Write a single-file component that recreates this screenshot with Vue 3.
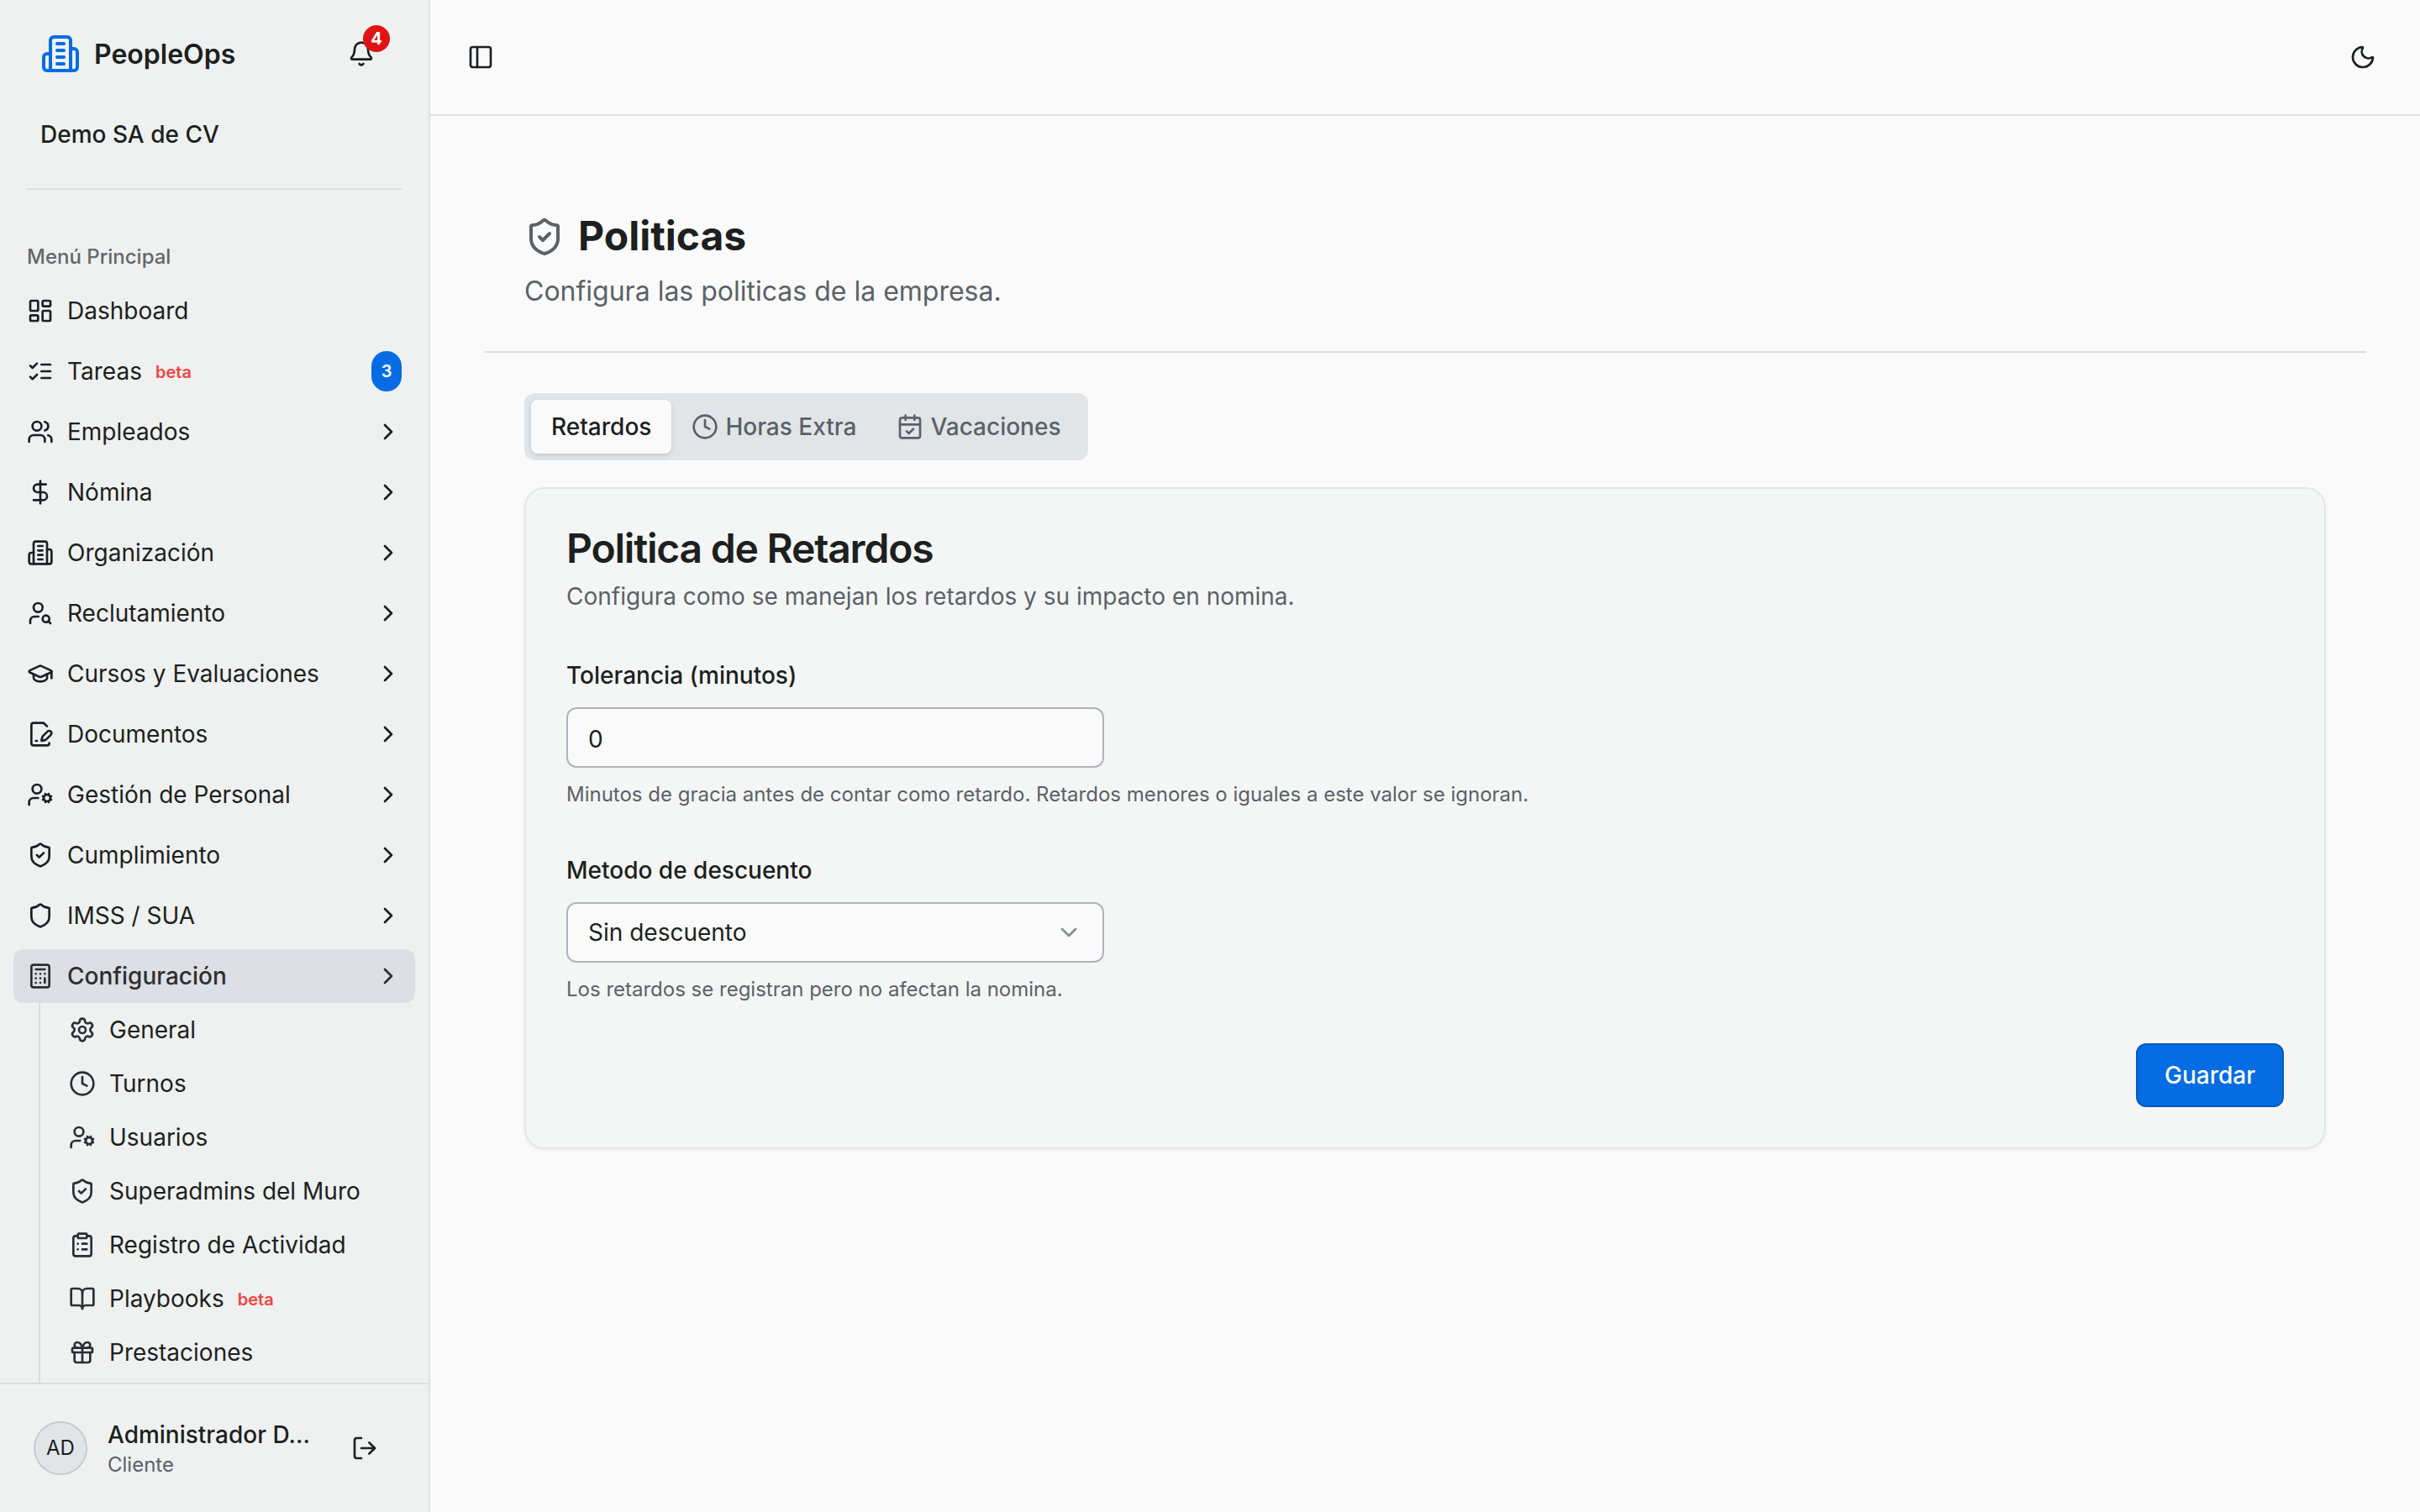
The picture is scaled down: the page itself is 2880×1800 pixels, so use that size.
<template>
  <div class="app-shell">
    <aside class="sidebar">
      <div class="sidebar-header">
        <div class="brand-row">
          <div class="brand">
            <svg class="icon brand-icon" viewBox="0 0 24 24" v-html="icons.building"></svg>
            <span class="brand-name">PeopleOps</span>
          </div>
          <button class="bell-button">
            <svg class="icon" viewBox="0 0 24 24" v-html="icons.bell"></svg>
            <span class="bell-badge">4</span>
          </button>
        </div>
        <p class="company">Demo SA de CV</p>
      </div>
      <div class="sidebar-separator"></div>

      <!-- Main navigation -->
      <nav class="sidebar-nav">
        <p class="nav-label">Menú Principal</p>
        <ul class="nav-list">
          <li
            v-for="item in menu"
            :key="item.label"
            class="nav-item"
            :class="{ active: item.active }"
          >
            <svg class="icon" viewBox="0 0 24 24" v-html="icons[item.icon]"></svg>
            <span class="nav-text">{{ item.label }}</span>
            <span v-if="item.beta" class="beta">beta</span>
            <span v-if="item.count" class="nav-count">{{ item.count }}</span>
            <svg
              v-if="item.children"
              class="icon nav-chevron"
              viewBox="0 0 24 24"
              v-html="icons.chevronRight"
            ></svg>
          </li>
        </ul>
        <ul class="subnav">
          <li v-for="item in submenu" :key="item.label" class="subnav-item">
            <svg class="icon" viewBox="0 0 24 24" v-html="icons[item.icon]"></svg>
            <span class="nav-text">{{ item.label }}</span>
            <span v-if="item.beta" class="beta">beta</span>
          </li>
        </ul>
      </nav>

      <!-- User -->
      <div class="sidebar-footer">
        <div class="avatar">AD</div>
        <div class="user-info">
          <p class="user-name">Administrador D…</p>
          <p class="user-role">Cliente</p>
        </div>
        <svg class="icon" viewBox="0 0 24 24" v-html="icons.logout"></svg>
      </div>
    </aside>

    <div class="main">
      <header class="topbar">
        <svg class="icon" viewBox="0 0 24 24" v-html="icons.panel"></svg>
        <svg class="icon" viewBox="0 0 24 24" v-html="icons.moon"></svg>
      </header>

      <main class="content">
        <div class="page-header">
          <h1 class="page-title">
            <svg class="icon title-icon" viewBox="0 0 24 24" v-html="icons.shieldCheck"></svg>
            <span class="title-text">Politicas</span>
          </h1>
          <p class="page-description">Configura las politicas de la empresa.</p>
        </div>

        <div class="page-body">
          <div class="tabs">
            <button
              v-for="tab in tabs"
              :key="tab.id"
              class="tab"
              :class="{ selected: tab.id === activeTab }"
              @click="activeTab = tab.id"
            >
              <svg v-if="tab.icon" class="icon" viewBox="0 0 24 24" v-html="icons[tab.icon]"></svg>
              <span>{{ tab.label }}</span>
            </button>
          </div>

          <section class="card">
            <h2 class="card-title">Politica de Retardos</h2>
            <p class="card-description">
              Configura como se manejan los retardos y su impacto en nomina.
            </p>

            <div class="field">
              <label class="field-label" for="tolerancia">Tolerancia (minutos)</label>
              <input id="tolerancia" v-model="tolerance" class="control" type="text" />
              <p class="field-help">
                Minutos de gracia antes de contar como retardo. Retardos menores o iguales a este valor se ignoran.
              </p>
            </div>

            <div class="field">
              <label class="field-label">Metodo de descuento</label>
              <button class="control select">
                <span>Sin descuento</span>
                <svg class="icon select-icon" viewBox="0 0 24 24" v-html="icons.chevronDown"></svg>
              </button>
              <p class="field-help">Los retardos se registran pero no afectan la nomina.</p>
            </div>

            <div class="card-actions">
              <button class="save-button">Guardar</button>
            </div>
          </section>
        </div>
      </main>
    </div>
  </div>
</template>

<script setup>
import { ref } from 'vue';

const activeTab = ref('retardos');
const tolerance = ref('0');

const tabs = [
  { id: 'retardos', label: 'Retardos' },
  { id: 'horas', label: 'Horas Extra', icon: 'clock' },
  { id: 'vacaciones', label: 'Vacaciones', icon: 'calendarCheck' }
];

const menu = [
  { label: 'Dashboard', icon: 'dashboard' },
  { label: 'Tareas', icon: 'listChecks', beta: true, count: 3 },
  { label: 'Empleados', icon: 'users', children: true },
  { label: 'Nómina', icon: 'dollar', children: true },
  { label: 'Organización', icon: 'building', children: true },
  { label: 'Reclutamiento', icon: 'userSearch', children: true },
  { label: 'Cursos y Evaluaciones', icon: 'graduation', children: true },
  { label: 'Documentos', icon: 'filePen', children: true },
  { label: 'Gestión de Personal', icon: 'userCog', children: true },
  { label: 'Cumplimiento', icon: 'shieldCheck', children: true },
  { label: 'IMSS / SUA', icon: 'shield', children: true },
  { label: 'Configuración', icon: 'calculator', children: true, active: true }
];

const submenu = [
  { label: 'General', icon: 'settings' },
  { label: 'Turnos', icon: 'clock' },
  { label: 'Usuarios', icon: 'userCog' },
  { label: 'Superadmins del Muro', icon: 'shieldCheck' },
  { label: 'Registro de Actividad', icon: 'clipboard' },
  { label: 'Playbooks', icon: 'book', beta: true },
  { label: 'Prestaciones', icon: 'gift' }
];

const shieldPath = '<path d="M20 13c0 5-3.5 7.5-7.66 8.95a1 1 0 0 1-.67-.01C7.5 20.5 4 18 4 13V6a1 1 0 0 1 1-1c2 0 4.5-1.2 6.24-2.72a1.17 1.17 0 0 1 1.52 0C14.51 3.81 17 5 19 5a1 1 0 0 1 1 1z"/>';

// 24x24 stroke icons
const icons = {
  building: '<path d="M6 22V4a2 2 0 0 1 2-2h8a2 2 0 0 1 2 2v18Z"/><path d="M6 12H4a2 2 0 0 0-2 2v6a2 2 0 0 0 2 2h2"/><path d="M18 9h2a2 2 0 0 1 2 2v9a2 2 0 0 1-2 2h-2"/><path d="M10 6h4M10 10h4M10 14h4M10 18h4"/>',
  bell: '<path d="M10.268 21a2 2 0 0 0 3.464 0"/><path d="M3.262 15.326A1 1 0 0 0 4 17h16a1 1 0 0 0 .74-1.673C19.41 13.956 18 12.499 18 8A6 6 0 0 0 6 8c0 4.499-1.411 5.956-2.738 7.326"/>',
  dashboard: '<rect width="7" height="9" x="3" y="3" rx="1"/><rect width="7" height="5" x="14" y="3" rx="1"/><rect width="7" height="9" x="14" y="12" rx="1"/><rect width="7" height="5" x="3" y="16" rx="1"/>',
  listChecks: '<path d="m3 17 2 2 4-4"/><path d="m3 7 2 2 4-4"/><path d="M13 6h8M13 12h8M13 18h8"/>',
  users: '<path d="M16 21v-2a4 4 0 0 0-4-4H6a4 4 0 0 0-4 4v2"/><circle cx="9" cy="7" r="4"/><path d="M22 21v-2a4 4 0 0 0-3-3.87"/><path d="M16 3.13a4 4 0 0 1 0 7.75"/>',
  dollar: '<path d="M12 2v20"/><path d="M17 5H9.5a3.5 3.5 0 0 0 0 7h5a3.5 3.5 0 0 1 0 7H6"/>',
  userSearch: '<circle cx="10" cy="7" r="4"/><path d="M10.3 15H7a4 4 0 0 0-4 4v2"/><circle cx="17" cy="17" r="3"/><path d="m21 21-1.9-1.9"/>',
  graduation: '<path d="M21.42 10.922a1 1 0 0 0-.019-1.838L12.83 5.18a2 2 0 0 0-1.66 0L2.6 9.08a1 1 0 0 0 0 1.832l8.57 3.908a2 2 0 0 0 1.66 0z"/><path d="M22 10v6"/><path d="M6 12.5V16a6 3 0 0 0 12 0v-3.5"/>',
  filePen: '<path d="m18 5-2.414-2.414A2 2 0 0 0 14.172 2H6a2 2 0 0 0-2 2v16a2 2 0 0 0 2 2h12a2 2 0 0 0 2-2"/><path d="M21.378 12.626a1 1 0 0 0-3.004-3.004l-4.01 4.012a2 2 0 0 0-.506.854l-.837 2.87a.5.5 0 0 0 .62.62l2.87-.837a2 2 0 0 0 .854-.506z"/><path d="M8 18h1"/>',
  userCog: '<path d="M10 15H6a4 4 0 0 0-4 4v2"/><path d="m14.305 16.53.923-.382M15.228 13.852l-.923-.383M16.852 12.228l-.383-.923M16.852 17.772l-.383.924M19.148 12.228l.383-.923M19.53 18.696l-.382-.924M20.772 13.852l.924-.383M20.772 16.148l.924.383"/><circle cx="18" cy="15" r="3"/><circle cx="9" cy="7" r="4"/>',
  shield: shieldPath,
  shieldCheck: shieldPath + '<path d="m9 12 2 2 4-4"/>',
  calculator: '<rect width="16" height="20" x="4" y="2" rx="2"/><path d="M8 6h8M16 14v4M16 10h.01M12 10h.01M8 10h.01M12 14h.01M8 14h.01M12 18h.01M8 18h.01"/>',
  settings: '<path d="M9.671 4.136a2.34 2.34 0 0 1 4.659 0 2.34 2.34 0 0 0 3.319 1.915 2.34 2.34 0 0 1 2.33 4.033 2.34 2.34 0 0 0 0 3.831 2.34 2.34 0 0 1-2.33 4.033 2.34 2.34 0 0 0-3.319 1.915 2.34 2.34 0 0 1-4.659 0 2.34 2.34 0 0 0-3.32-1.915 2.34 2.34 0 0 1-2.33-4.033 2.34 2.34 0 0 0 0-3.831A2.34 2.34 0 0 1 6.35 6.051a2.34 2.34 0 0 0 3.319-1.915"/><circle cx="12" cy="12" r="3"/>',
  clock: '<circle cx="12" cy="12" r="10"/><path d="M12 6v6l4 2"/>',
  clipboard: '<rect width="8" height="4" x="8" y="2" rx="1"/><path d="M16 4h2a2 2 0 0 1 2 2v14a2 2 0 0 1-2 2H6a2 2 0 0 1-2-2V6a2 2 0 0 1 2-2h2"/><path d="M12 11h4M12 16h4M8 11h.01M8 16h.01"/>',
  book: '<path d="M12 7v14"/><path d="M3 18a1 1 0 0 1-1-1V4a1 1 0 0 1 1-1h5a4 4 0 0 1 4 4 4 4 0 0 1 4-4h5a1 1 0 0 1 1 1v13a1 1 0 0 1-1 1h-6a3 3 0 0 0-3 3 3 3 0 0 0-3-3z"/>',
  gift: '<rect width="18" height="4" x="3" y="8" rx="1"/><path d="M12 8v13"/><path d="M19 12v7a2 2 0 0 1-2 2H7a2 2 0 0 1-2-2v-7"/><path d="M7.5 8a2.5 2.5 0 0 1 0-5A4.8 8 0 0 1 12 8a4.8 8 0 0 1 4.5-5 2.5 2.5 0 0 1 0 5"/>',
  calendarCheck: '<path d="M8 2v4M16 2v4"/><rect width="18" height="18" x="3" y="4" rx="2"/><path d="M3 10h18"/><path d="m9 16 2 2 4-4"/>',
  logout: '<path d="m16 17 5-5-5-5"/><path d="M21 12H9"/><path d="M9 21H5a2 2 0 0 1-2-2V5a2 2 0 0 1 2-2h4"/>',
  panel: '<rect width="18" height="18" x="3" y="3" rx="2"/><path d="M9 3v18"/>',
  moon: '<path d="M20.985 12.486a9 9 0 1 1-9.473-9.472c.405-.022.617.46.402.803a6 6 0 0 0 8.268 8.268c.344-.215.825-.004.803.401"/>',
  chevronRight: '<path d="m9 18 6-6-6-6"/>',
  chevronDown: '<path d="m6 9 6 6 6-6"/>'
};
</script>

<style>
body {
  margin: 0;
  background-color: #fafafa;
}
</style>

<style scoped>
.app-shell {
  display: flex;
  height: 1800px;
  overflow: hidden;
  font-family: Inter, "Liberation Sans", sans-serif;
  font-size: 28px;
  line-height: 40px;
  color: #1d1f20;
  background-color: #fafafa;
}

.app-shell * {
  box-sizing: border-box;
}

p,
h1,
h2,
ul {
  margin: 0;
  padding: 0;
  list-style: none;
}

button,
input {
  margin: 0;
  padding: 0;
  border: none;
  background: none;
  font: inherit;
  letter-spacing: inherit;
  color: inherit;
}

.icon {
  flex-shrink: 0;
  width: 32px;
  height: 32px;
  fill: none;
  stroke: currentColor;
  stroke-width: 2;
  stroke-linecap: round;
  stroke-linejoin: round;
}

/* Sidebar */
.sidebar {
  display: flex;
  flex-direction: column;
  flex-shrink: 0;
  width: 512px;
  box-sizing: border-box;
  border-right: 2px solid #dfe1e1;
  background-color: #eef1f0;
}

.sidebar-header {
  padding: 32px 48px 0;
}

.brand-row {
  display: flex;
  align-items: center;
  justify-content: space-between;
  height: 64px;
}

.brand {
  display: flex;
  align-items: center;
  gap: 16px;
}

.brand-icon {
  width: 48px;
  height: 48px;
  color: #056ce4;
}

.brand-name {
  padding-top: 2px;
  font-size: 32px;
  font-weight: 600;
}

.bell-button {
  position: relative;
  display: flex;
  margin-right: 16px;
}

.bell-badge {
  position: absolute;
  top: -18px;
  right: -18px;
  width: 32px;
  height: 32px;
  border-radius: 50%;
  background-color: #e11414;
  color: #fff;
  font-size: 20px;
  font-weight: 700;
  line-height: 33px;
  text-align: center;
}

.company {
  margin-top: 44px;
  font-weight: 500;
}

.sidebar-separator {
  flex-shrink: 0;
  height: 2px;
  margin: 44px 32px 0;
  background-color: #dfe1e1;
}

.sidebar-nav {
  flex: 1;
  min-height: 0;
  overflow: hidden;
  padding: 48px 16px 0;
}

.nav-label {
  height: 64px;
  padding: 0 16px;
  font-size: 24px;
  font-weight: 500;
  line-height: 64px;
  color: #656768;
}

.nav-list {
  display: flex;
  flex-direction: column;
  gap: 8px;
}

.nav-item,
.subnav-item {
  display: flex;
  align-items: center;
  gap: 16px;
  height: 64px;
  padding: 0 16px;
}

.nav-item.active {
  border-radius: 12px;
  background-color: #dedfe4;
  color: #2c2e32;
  font-weight: 500;
}

.beta {
  padding-top: 2px;
  font-size: 20px;
  font-weight: 600;
  color: #f04444;
}

.nav-count {
  width: 36px;
  height: 48px;
  margin-left: auto;
  border-radius: 18px;
  background-color: #056ce4;
  color: #fff;
  font-size: 20px;
  font-weight: 600;
  line-height: 49px;
  text-align: center;
}

.nav-chevron {
  margin-left: auto;
}

.subnav {
  margin-left: 30px;
  padding: 0 0 8px 18px;
  border-left: 2px solid #dadcdc;
}

.subnav-item .icon {
  color: #2c2e32;
}

.sidebar-footer {
  display: flex;
  align-items: center;
  flex-shrink: 0;
  height: 154px;
  padding: 0 60px 0 40px;
  border-top: 2px solid #dcdfe1;
}

.avatar {
  flex-shrink: 0;
  width: 64px;
  height: 64px;
  border: 2px solid #c9cccf;
  border-radius: 50%;
  background-color: #e1e5e8;
  font-size: 24px;
  line-height: 60px;
  text-align: center;
}

.user-info {
  flex: 1;
  min-width: 0;
  padding-left: 24px;
}

.user-name {
  font-weight: 500;
  white-space: nowrap;
}

.user-role {
  font-size: 24px;
  line-height: 32px;
  color: #5b6168;
}

/* Main area */
.main {
  flex: 1;
  min-width: 0;
}

.topbar {
  display: flex;
  align-items: center;
  justify-content: space-between;
  height: 138px;
  padding: 0 52px 0 44px;
  border-bottom: 2px solid #dfe1e1;
}

.content {
  padding: 112px 64px 0;
}

.page-header {
  padding: 0 48px 47px;
  border-bottom: 2px solid #dfe1e1;
}

.page-title {
  display: flex;
  align-items: center;
  gap: 16px;
  font-size: 48px;
  font-weight: 700;
  line-height: 64px;
}

.title-icon {
  width: 48px;
  height: 48px;
  color: #5b6168;
}

.title-text {
  height: 64px;
  line-height: 62px;
}

.page-description {
  margin-top: 9px;
  font-size: 32px;
  line-height: 48px;
  color: #5b6168;
}

.page-body {
  padding: 48px 48px 0;
}

.tabs {
  display: inline-flex;
  vertical-align: top;
  height: 80px;
  padding: 8px;
  border-radius: 12px;
  background-color: #e1e5e8;
}

.tab {
  display: flex;
  align-items: center;
  gap: 8px;
  padding: 0 24px;
  border-radius: 8px;
  font-weight: 500;
  color: #5b6168;
}

.tab.selected {
  background-color: #fafafa;
  color: #1d1f20;
  box-shadow: 0 2px 6px rgba(0, 0, 0, 0.1), 0 2px 4px -2px rgba(0, 0, 0, 0.1);
}

/* Policy card */
.card {
  margin-top: 32px;
  padding: 48px;
  border: 2px solid #e4e7e6;
  border-radius: 24px;
  background-color: #f4f6f5;
  box-shadow: 0 2px 4px rgba(0, 0, 0, 0.05);
}

.card-title {
  height: 48px;
  font-size: 48px;
  font-weight: 600;
  line-height: 46px;
  letter-spacing: -0.025em;
}

.card-description {
  margin-top: 12px;
  color: #5b6168;
}

.field {
  margin-top: 52px;
}

.field-label {
  display: block;
  margin-bottom: 16px;
  font-weight: 500;
  line-height: 44px;
}

.control {
  display: flex;
  align-items: center;
  width: 640px;
  height: 72px;
  padding: 0 24px;
  border: 2px solid #b0b5bb;
  border-radius: 12px;
  background-color: #fafafa;
}

input.control {
  padding-top: 3px;
}

.select {
  justify-content: space-between;
}

.select-icon {
  opacity: 0.5;
}

.field-help {
  margin-top: 16px;
  font-size: 24px;
  line-height: 32px;
  color: #5b6168;
}

.card-actions {
  display: flex;
  justify-content: flex-end;
  margin-top: 48px;
}

.save-button {
  width: 176px;
  height: 76px;
  border: 2px solid #0559bd;
  border-radius: 12px;
  background-color: #056ce4;
  color: #fff;
  font-weight: 500;
}
</style>
